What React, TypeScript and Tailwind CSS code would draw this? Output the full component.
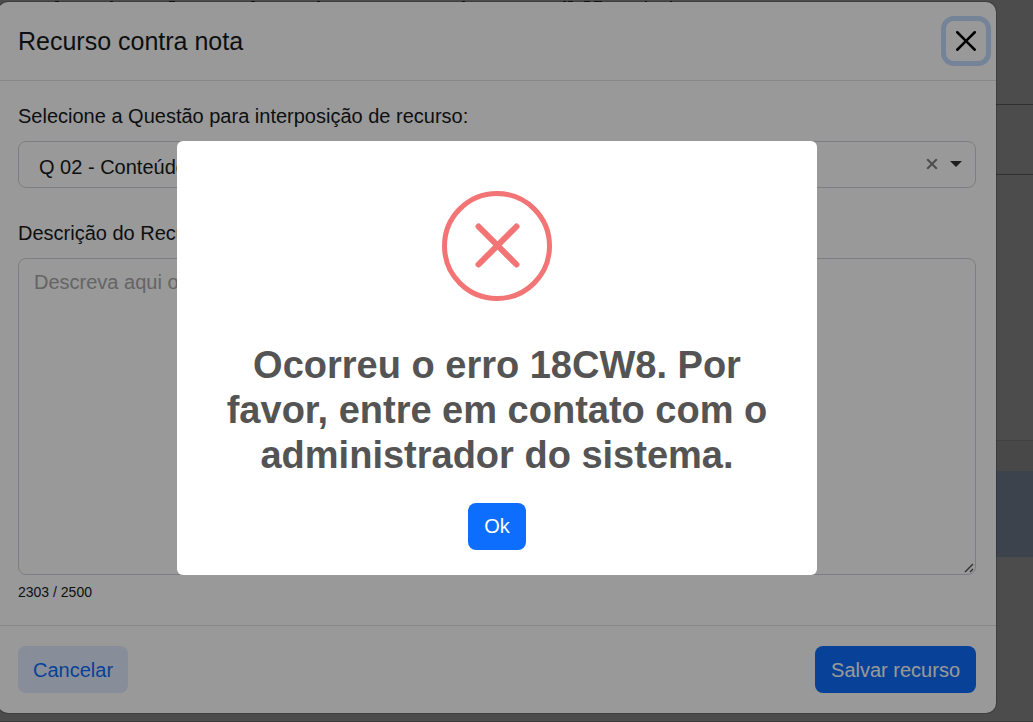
import { useState } from "react";

const QUESTIONS = ["Q 02 - Conteúdo"];

function PageBehind() {
  return (
    <div className="absolute inset-0 flex flex-col bg-white" aria-hidden="true">
      <div className="h-[105px] border-b border-[#a0a0a0]">
        {/* ends of a line of text cut off by the scroll */}
        <svg className="h-0.5 w-[1000px]" viewBox="0 0 1000 2" stroke="#444" strokeWidth="1">
          <path d="M55 1.5h4M110 1.5h3M169 1.5h6M251 1.5h4M317 1.5h3M462 1.5h3M563 1.5h3M568 1.5h5M584 1.5h6M594 1.5h8M645 1.5h2M670 1.5h2" />
        </svg>
      </div>
      <div className="h-[70px] border-b border-[#a0a0a0]" />
      <div className="h-[266px] border-b border-[#d8dade]" />
      <div className="h-[30px] bg-[#f2f3f5]" />
      <div className="h-[86px] bg-[#cfe2ff]" />
      <div className="flex-1 border-b border-[#c8c8c8]" />
    </div>
  );
}

function AppealModal() {
  const [question, setQuestion] = useState(QUESTIONS[0]);

  return (
    <section
      role="dialog"
      aria-labelledby="appeal-title"
      className="mt-0.5 -ml-0.5 mr-[37px] rounded-[10px] bg-white text-xl leading-[30px] text-[#16191c] shadow-[0_0_0_1px_rgba(0,0,0,0.175)]"
    >
      <header className="flex h-[79px] items-center justify-between border-b border-[#dee2e6] pl-5 pr-2.5">
        <h1 id="appeal-title" className="text-[25px]">Recurso contra nota</h1>
        <button
          type="button"
          aria-label="Fechar"
          className="flex size-10 items-center justify-center rounded-lg ring-[5px] ring-[#c2dbfe]"
        >
          <svg viewBox="0 0 16 16" className="size-5" fill="#000">
            <path d="M.293.293a1 1 0 0 1 1.414 0L8 6.586 14.293.293a1 1 0 1 1 1.414 1.414L9.414 8l6.293 6.293a1 1 0 0 1-1.414 1.414L8 9.414l-6.293 6.293a1 1 0 0 1-1.414-1.414L6.586 8 .293 1.707a1 1 0 0 1 0-1.414z" />
          </svg>
        </button>
      </header>

      <div className="px-5 pt-5 pb-[23px]">
        <label htmlFor="question" className="block">
          Selecione a Questão para interposição de recurso:
        </label>
        <div className="mt-2.5 flex h-[47px] items-center rounded-lg border border-[#ced4da] pr-[13px] pb-0.5">
          <select
            id="question"
            value={question}
            onChange={(e) => setQuestion(e.target.value)}
            className="h-full min-w-0 flex-1 appearance-none bg-transparent pl-5 pt-1.5 outline-none"
          >
            {QUESTIONS.map((q) => (
              <option key={q}>{q}</option>
            ))}
          </select>
          <button type="button" aria-label="Limpar" className="mr-3 flex">
            <svg viewBox="0 0 12 12" className="size-3" stroke="#808080" strokeWidth="2" fill="none">
              <path d="M1.2 1.2l9.6 9.6M10.800 1.200L1.200 10.800" />
            </svg>
          </button>
          <svg viewBox="0 0 12 6" className="h-1.5 w-3" fill="#333">
            <path d="M0 0h12L6 6z" />
          </svg>
        </div>

        <label htmlFor="description" className="mt-[30px] block">
          Descrição do Recurso:
        </label>
        <div className="relative mt-2.5">
          <textarea
            id="description"
            placeholder="Descreva aqui o recurso"
            className="block h-[317px] w-full resize-none rounded-lg border border-[#ced4da] px-[15px] py-2 outline-none placeholder:text-[#a8a8a8]"
          />
          <svg
            viewBox="0 0 10 10"
            className="pointer-events-none absolute right-0.5 bottom-0.5 size-2.5"
            stroke="#505050"
            strokeWidth="1.4"
          >
            <path d="M1 9l8-8M6 9l3-3" />
          </svg>
        </div>
        <p className="mt-[7px] text-sm leading-5">2303 / 2500</p>
      </div>

      <footer className="flex justify-between border-t border-[#dee2e6] p-5">
        <button type="button" className="h-[47px] rounded-lg bg-[#e2ecff] px-[15px] text-[#0d6efd]">
          Cancelar
        </button>
        <button type="button" className="h-[47px] rounded-lg bg-[#0d6efd] px-4 text-white">
          Salvar recurso
        </button>
      </footer>
    </section>
  );
}

function ErrorAlert() {
  return (
    <div
      role="alertdialog"
      aria-labelledby="alert-title"
      className="flex w-full max-w-[640px] flex-col items-center rounded-md bg-white px-5 pt-[50px] pb-[25px]"
    >
      <svg viewBox="0 0 110 110" className="size-[110px]" fill="none" stroke="#f27474">
        <circle cx="55" cy="55" r="52.5" strokeWidth="5" />
        <path d="M36.500 35.500l38 38M74.500 35.500l-38 38" strokeWidth="6" strokeLinecap="round" />
      </svg>
      <h2
        id="alert-title"
        className="mt-[42px] px-5 text-center text-[38px] leading-[45px] font-bold text-[#545454]"
      >
        Ocorreu o erro 18CW8. Por favor, entre em contato com o administrador do sistema.
      </h2>
      <button
        type="button"
        className="mt-[25px] h-[47px] rounded-lg bg-[#0d6efd] px-4 pb-0.5 text-xl text-white"
      >
        Ok
      </button>
    </div>
  );
}

export default function App() {
  return (
    <main className="relative min-h-screen overflow-hidden font-['Liberation_Sans',Arial,sans-serif]">
      <PageBehind />
      <div className="absolute inset-0 bg-black/50" />
      <div className="relative">
        <AppealModal />
      </div>
      <div className="absolute inset-0 flex items-start justify-center bg-black/40 pt-[141px] pr-[39px]">
        <ErrorAlert />
      </div>
    </main>
  );
}
